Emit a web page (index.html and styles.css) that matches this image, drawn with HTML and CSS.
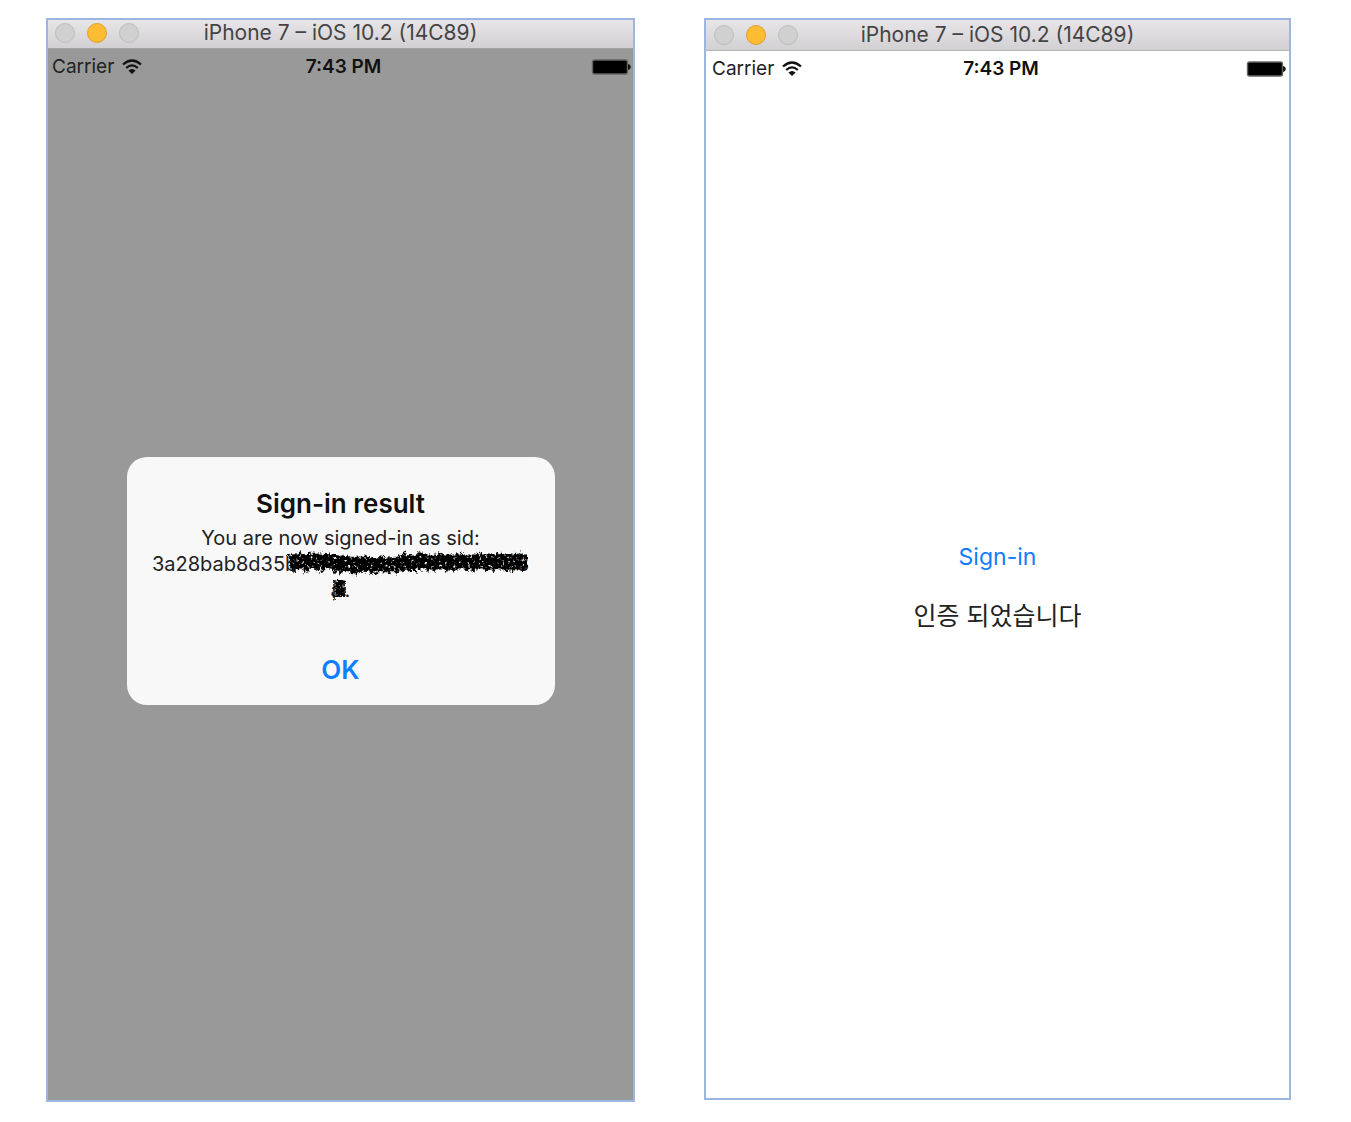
FILE: index.html
```html
<!DOCTYPE html>
<html lang="ko">
<head>
<meta charset="utf-8">
<meta name="viewport" content="width=device-width, initial-scale=1">
<title>iPhone 7 – iOS 10.2 (14C89)</title>
<link rel="stylesheet" href="styles.css">
</head>
<body>
<svg class="defs" aria-hidden="true">
  <defs>
    <filter id="pencil" x="-5%" y="-30%" width="110%" height="160%">
      <feTurbulence type="fractalNoise" baseFrequency="0.35" numOctaves="2" seed="7" result="noise"/>
      <feDisplacementMap in="SourceGraphic" in2="noise" scale="6" xChannelSelector="R" yChannelSelector="G" result="rough"/>
      <feColorMatrix in="noise" type="matrix" values="0 0 0 0 0  0 0 0 0 0  0 0 0 0 0  0 0 -5 0 4" result="grain"/>
      <feComposite in="rough" in2="grain" operator="in"/>
    </filter>
    <symbol id="wifi" viewBox="0 0 20 16">
      <path d="M1 5.5Q10 -2.5 19 5.5M4.2 9Q10 3.6 15.8 9" fill="none" stroke="currentColor" stroke-width="2.2"/>
      <path d="M10 15L6.4 11.6Q10 8.6 13.6 11.6Z" fill="currentColor"/>
    </symbol>
    <symbol id="battery" viewBox="0 0 40 16">
      <rect x="1.5" y="1" width="35" height="14" rx="2" fill="#000" stroke="#666" stroke-width="1.4"/>
      <path d="M37 5Q39.8 5.6 39.8 8T37 11Z" fill="#111"/>
    </symbol>
  </defs>
</svg>
<main class="stage">
  <section class="phone phone-dimmed">
    <header class="titlebar">
      <div class="lights"><i class="light"></i><i class="light light-on"></i><i class="light"></i></div>
      <h1 class="window-title">iPhone 7 – iOS 10.2 (14C89)</h1>
    </header>
    <div class="status">
      <span class="carrier">Carrier <svg class="wifi"><use href="#wifi"/></svg></span>
      <span class="time">7:43 PM</span>
      <svg class="battery"><use href="#battery"/></svg>
    </div>
    <div class="screen screen-alert">
      <div class="alert" role="alertdialog" aria-labelledby="alert-title" aria-describedby="alert-message">
        <h2 class="alert-title" id="alert-title">Sign-in result</h2>
        <p class="alert-message" id="alert-message">
          <span>You are now signed-in as sid:</span>
          <span class="sid">3a28bab8d35<span class="redacted">
            <span>b</span><span>8</span>
            <svg class="scribble" viewBox="0 0 244 26"><g filter="url(#pencil)" fill="none" stroke="#000">
              <path d="M5 11L35 10L65 13L105 14L130 11L180 11L242 11" stroke-width="15"/>
              <path d="M3 3L9 20L15 2L23 20L29 3L38 20L44 3L55 22L62 5L72 23L80 5L92 23L99 5L112 22L119 2L130 20L137 2L149 20L156 2L169 20L176 2L188 20L196 2L208 20L216 2L227 20L235 2L241 19" stroke-width="2"/>
              <path d="M6 20L12 3L19 20L26 3L33 20L41 4L50 22L58 5L67 23L76 5L86 23L96 5L105 22L115 4L125 20L134 2L143 20L153 2L162 20L172 2L182 20L192 2L202 20L212 2L222 20L231 2L238 20" stroke-width="1.5"/>
            </g></svg>
          </span></span>
          <span class="sid"><span class="redacted redacted-short">
            <span>a</span>
            <svg class="scribble" viewBox="0 0 14 26"><g filter="url(#pencil)" fill="none" stroke="#000">
              <path d="M9 3V20" stroke-width="9"/>
              <path d="M3 3V24M3 5H14V20" stroke-width="1.5"/>
            </g></svg>
          </span>.</span>
        </p>
        <button class="alert-button" type="button">OK</button>
      </div>
    </div>
  </section>

  <section class="phone phone-plain">
    <header class="titlebar">
      <div class="lights"><i class="light"></i><i class="light light-on"></i><i class="light"></i></div>
      <h1 class="window-title">iPhone 7 – iOS 10.2 (14C89)</h1>
    </header>
    <div class="status">
      <span class="carrier">Carrier <svg class="wifi"><use href="#wifi"/></svg></span>
      <span class="time">7:43 PM</span>
      <svg class="battery"><use href="#battery"/></svg>
    </div>
    <div class="screen screen-result">
      <button class="signin" type="button">Sign-in</button>
      <p class="result">인증 되었습니다</p>
    </div>
  </section>
</main>
</body>
</html>
```
FILE: styles.css
```css
* { box-sizing: border-box; }

body {
  margin: 0;
  background: #fff;
  color: #222;
  font-family: Inter, "Noto Sans CJK KR", sans-serif;
}

h1, h2, p { margin: 0; }

button {
  padding: 0;
  border: 0;
  background: none;
  font-family: inherit;
  color: #117eff;
  cursor: pointer;
}

.defs {
  position: absolute;
  width: 0;
  height: 0;
}

.stage {
  display: grid;
  grid-template-columns: 589fr 587fr;
  column-gap: 69px;
  min-height: 100vh;
  padding: 18px 60px 20px 46px;
}

.phone {
  display: flex;
  flex-direction: column;
  border: 2px solid #9db5e3;
}

.phone-dimmed { background: #999; }

.phone-plain {
  margin-bottom: 2px;
  background: #fff;
}

.titlebar {
  display: grid;
  grid-template-columns: 1fr auto 1fr;
  align-items: center;
  height: 31px;
  padding: 0 8px;
  border-bottom: 1px solid #b4b2b4;
  background: linear-gradient(#e8e5e8, #d2d0d2);
}

.phone-dimmed .titlebar {
  height: 29px;
  padding: 0 7px 3px;
  border-color: #a5a4a5;
}

.lights {
  display: flex;
  gap: 12px;
}

.light {
  width: 20px;
  height: 20px;
  border: 1px solid #bdbdbd;
  border-radius: 50%;
  background: #d0d0d0;
}

.light-on {
  border-color: #e0a035;
  background: #fdbc32;
}

.window-title {
  font-size: 21px;
  line-height: 26px;
  font-weight: 400;
  color: #444;
}

.status {
  display: grid;
  grid-template-columns: 1fr auto 1fr;
  align-items: center;
  height: 35px;
  padding: 0 2px 0 4px;
  font-size: 19px;
  line-height: 24px;
}

.phone-plain .status { padding: 0 3px 0 6px; }

.carrier {
  display: flex;
  align-items: center;
  gap: 8px;
}

.wifi {
  width: 20px;
  height: 16px;
  color: #111;
}

.time {
  padding-left: 4px;
  font-weight: 600;
  color: #111;
}

.battery {
  justify-self: end;
  width: 40px;
  height: 16px;
}

.screen {
  flex: 1;
  display: flex;
  flex-direction: column;
  align-items: center;
  justify-content: center;
}

.screen-alert { padding-bottom: 22px; }

.alert {
  display: flex;
  flex-direction: column;
  align-items: center;
  width: 428px;
  max-width: 100%;
  padding: 30px 20px 18px;
  border-radius: 20px;
  background: #f8f8f9;
}

.alert-title {
  font-size: 26px;
  line-height: 34px;
  font-weight: 600;
  color: #111;
}

.alert-message {
  display: flex;
  flex-direction: column;
  align-items: center;
  margin: 4px 0 50px;
  font-size: 20px;
  line-height: 26px;
}

.sid {
  display: flex;
}

.redacted {
  position: relative;
  display: flex;
  justify-content: space-between;
  width: 244px;
}

.redacted-short { width: 14px; }

.scribble {
  position: absolute;
  inset: 0;
  width: 100%;
  height: 26px;
  overflow: visible;
}

.alert-button {
  width: 100%;
  font-size: 26px;
  line-height: 34px;
  font-weight: 600;
}

.screen-result {
  gap: 28px;
  padding-bottom: 10px;
}

.signin {
  font-size: 23px;
  line-height: 30px;
}

.result {
  font-size: 25px;
  line-height: 32px;
}
```
